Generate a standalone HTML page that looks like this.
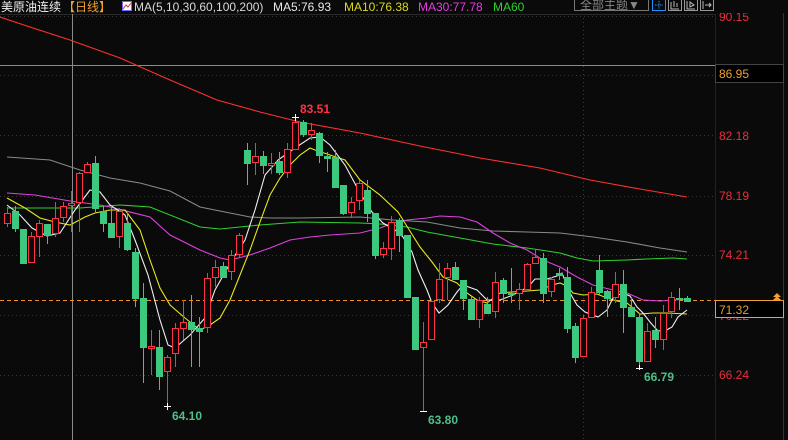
<!DOCTYPE html>
<html><head><meta charset="utf-8"><style>
body{margin:0;background:#0a0a0a;width:788px;height:440px;overflow:hidden;font-family:"Liberation Sans","Noto Sans CJK SC",sans-serif}
svg{position:absolute;left:0;top:0}
</style></head><body>
<svg width="788" height="440" viewBox="0 0 788 440" xmlns="http://www.w3.org/2000/svg" font-family="Liberation Sans, Noto Sans CJK SC, sans-serif">
<rect width="788" height="440" fill="#0a0a0a"/>
<g stroke="#3a3a3a" stroke-dasharray="1,3">
<line x1="0" y1="16.5" x2="715" y2="16.5"/><line x1="0" y1="75.5" x2="715" y2="75.5"/><line x1="0" y1="135.5" x2="715" y2="135.5"/><line x1="0" y1="196.5" x2="715" y2="196.5"/><line x1="0" y1="255.5" x2="715" y2="255.5"/><line x1="0" y1="315.5" x2="715" y2="315.5"/><line x1="0" y1="375.5" x2="715" y2="375.5"/>
<line x1="583.5" y1="14" x2="583.5" y2="440"/>
</g>
<line x1="715.5" y1="14" x2="715.5" y2="440" stroke="#222"/>
<line x1="783.5" y1="0" x2="783.5" y2="440" stroke="#333"/>
<line x1="0" y1="14.5" x2="715" y2="14.5" stroke="#2a2a2a"/>
<line x1="0" y1="65.5" x2="715" y2="65.5" stroke="#8a8a8a"/>
<line x1="72.5" y1="14" x2="72.5" y2="440" stroke="#8a8a8a"/>
<line x1="0" y1="300.5" x2="715" y2="300.5" stroke="#f0902a" stroke-dasharray="4,3"/>
<g fill="none" stroke-width="1.1">
<polyline stroke="#ff3030" points="0,17 30,27 70,40 120,58 170,80 217,100 260,112 300,122 360,133 420,146 480,158 540,168 590,180 640,189 687,197"/>
<polyline stroke="#8a8a8a" points="7,157 50,160 80,170 110,178 140,183 170,191 200,207 230,213 250,217 270,218 300,218 360,217 393,220 427,222 460,228 493,231 527,232 560,233 593,237 627,242 660,248 687,252"/>
<polyline stroke="#30d030" points="7,208 80,208 120,205 150,207 200,227 220,229 260,225 300,222 360,223 380,224 407,227 427,232 460,238 493,244 527,248 547,251 560,253 577,258 593,261 627,260 647,259 673,258 687,259"/>
<polyline stroke="#e040e0" points="7,193 35,195 70,201 100,205 110,207 150,217 170,235 200,250 220,258 230,260 250,255 270,248 290,240 310,237 330,235 360,233 380,228 393,223 407,220 427,218 440,216 460,217 477,222 493,233 510,243 527,250 543,260 560,267 577,277 593,285 613,290 627,293 643,300 660,301 687,299"/>
<polyline stroke="#e8e820" points="7,198 25,208 40,218 55,222 70,225 85,217 95,213 110,210 125,210 140,230 150,260 160,288 170,305 185,318 200,330 210,325 220,318 230,300 240,275 250,250 260,222 270,195 280,178 290,165 300,155 310,148 315,150 330,155 345,160 360,180 380,195 398,212 408,228 420,247 432,262 443,277 457,283 467,293 477,300 487,303 500,293 512,292 527,291 540,290 552,285 560,283 567,286 573,293 583,295 597,294 607,298 617,301 627,303 640,314 653,313 667,313 687,314"/>
<polyline stroke="#f0f0f0" points="7,205 20,215 32,228 47,236 60,233 75,210 90,190 100,192 110,205 125,215 135,240 148,275 160,320 168,345 175,348 190,335 205,318 215,290 232,260 245,240 255,210 265,175 278,160 295,148 310,138 320,137 330,145 345,165 360,193 372,212 383,223 395,230 403,237 412,252 418,270 427,290 432,303 439,313 448,305 457,292 463,285 477,290 487,300 500,300 513,295 528,287 535,279 547,279 557,276 562,273 570,293 577,305 585,312 598,317 607,310 613,298 622,293 630,296 637,307 643,313 650,322 657,330 663,332 672,327 678,317 687,310"/>
</g>
<g stroke="#ff3246" fill="#0a0a0a">
<line x1="7.5" y1="207" x2="7.5" y2="227"/><rect x="4.5" y="213.5" width="6" height="10"/>
<line x1="31.5" y1="232" x2="31.5" y2="262"/><rect x="28.5" y="236.5" width="6" height="26"/>
<line x1="39.5" y1="220" x2="39.5" y2="257"/><rect x="36.5" y="223.5" width="6" height="13"/>
<line x1="55.5" y1="202" x2="55.5" y2="237"/><rect x="52.5" y="218.5" width="6" height="15"/>
<line x1="63.5" y1="202" x2="63.5" y2="222"/><rect x="60.5" y="206.5" width="6" height="11"/>
<line x1="71.5" y1="191" x2="71.5" y2="232"/><rect x="68.5" y="203.5" width="6" height="2"/>
<line x1="79.5" y1="172" x2="79.5" y2="232"/><rect x="76.5" y="173.5" width="6" height="29"/>
<line x1="87.5" y1="162" x2="87.5" y2="173"/><rect x="84.5" y="164.5" width="6" height="8"/>
<line x1="119.5" y1="208" x2="119.5" y2="248"/><rect x="116.5" y="211.5" width="6" height="25"/>
<line x1="151.5" y1="330" x2="151.5" y2="375"/><rect x="148.5" y="346.5" width="6" height="2"/>
<line x1="167.5" y1="355" x2="167.5" y2="408"/><rect x="164.5" y="357.5" width="6" height="14"/>
<line x1="175.5" y1="323" x2="175.5" y2="367"/><rect x="172.5" y="328.5" width="6" height="25"/>
<line x1="183.5" y1="300" x2="183.5" y2="340"/><rect x="180.5" y="322.5" width="6" height="6"/>
<line x1="207.5" y1="273" x2="207.5" y2="333"/><rect x="204.5" y="278.5" width="6" height="49"/>
<line x1="215.5" y1="260" x2="215.5" y2="287"/><rect x="212.5" y="267.5" width="6" height="10"/>
<line x1="231.5" y1="250" x2="231.5" y2="280"/><rect x="228.5" y="255.5" width="6" height="16"/>
<line x1="239.5" y1="233" x2="239.5" y2="257"/><rect x="236.5" y="235.5" width="6" height="19"/>
<line x1="255.5" y1="143" x2="255.5" y2="175"/><rect x="252.5" y="156.5" width="6" height="6"/>
<line x1="271.5" y1="153" x2="271.5" y2="174"/><rect x="268.5" y="163.5" width="6" height="2"/>
<line x1="287.5" y1="143" x2="287.5" y2="178"/><rect x="284.5" y="149.5" width="6" height="23"/>
<line x1="295.5" y1="117" x2="295.5" y2="150"/><rect x="292.5" y="122.5" width="6" height="27"/>
<line x1="311.5" y1="123" x2="311.5" y2="140"/><rect x="308.5" y="130.5" width="6" height="4"/>
<line x1="351.5" y1="197" x2="351.5" y2="218"/><rect x="348.5" y="202.5" width="6" height="10"/>
<line x1="359.5" y1="180" x2="359.5" y2="210"/><rect x="356.5" y="183.5" width="6" height="17"/>
<line x1="383.5" y1="242" x2="383.5" y2="258"/><rect x="380.5" y="248.5" width="6" height="6"/>
<line x1="391.5" y1="216" x2="391.5" y2="260"/><rect x="388.5" y="222.5" width="6" height="26"/>
<line x1="423.5" y1="322" x2="423.5" y2="412"/><rect x="420.5" y="342.5" width="6" height="5"/>
<line x1="431.5" y1="300" x2="431.5" y2="340"/><rect x="428.5" y="301.5" width="6" height="38"/>
<line x1="439.5" y1="263" x2="439.5" y2="303"/><rect x="436.5" y="279.5" width="6" height="20"/>
<line x1="447.5" y1="263" x2="447.5" y2="300"/><rect x="444.5" y="268.5" width="6" height="9"/>
<line x1="479.5" y1="297" x2="479.5" y2="328"/><rect x="476.5" y="300.5" width="6" height="19"/>
<line x1="495.5" y1="272" x2="495.5" y2="318"/><rect x="492.5" y="282.5" width="6" height="29"/>
<line x1="519.5" y1="283" x2="519.5" y2="310"/><rect x="516.5" y="289.5" width="6" height="4"/>
<line x1="527.5" y1="263" x2="527.5" y2="290"/><rect x="524.5" y="264.5" width="6" height="25"/>
<line x1="535.5" y1="249" x2="535.5" y2="263"/><rect x="532.5" y="257.5" width="6" height="6"/>
<line x1="551.5" y1="277" x2="551.5" y2="297"/><rect x="548.5" y="279.5" width="6" height="12"/>
<line x1="583.5" y1="315" x2="583.5" y2="357"/><rect x="580.5" y="318.5" width="6" height="38"/>
<line x1="591.5" y1="287" x2="591.5" y2="318"/><rect x="588.5" y="292.5" width="6" height="25"/>
<line x1="615.5" y1="272" x2="615.5" y2="303"/><rect x="612.5" y="284.5" width="6" height="13"/>
<line x1="647.5" y1="323" x2="647.5" y2="362"/><rect x="644.5" y="331.5" width="6" height="30"/>
<line x1="663.5" y1="305" x2="663.5" y2="350"/><rect x="660.5" y="313.5" width="6" height="26"/>
<line x1="671.5" y1="292" x2="671.5" y2="318"/><rect x="668.5" y="297.5" width="6" height="14"/>
</g>
<g stroke="#3cc87e" fill="#3cc87e">
<line x1="15.5" y1="206" x2="15.5" y2="232"/><rect x="12.5" y="211.5" width="6" height="17"/>
<line x1="23.5" y1="229" x2="23.5" y2="263"/><rect x="20.5" y="229.5" width="6" height="34"/>
<line x1="47.5" y1="224" x2="47.5" y2="244"/><rect x="44.5" y="224.5" width="6" height="11"/>
<line x1="95.5" y1="156" x2="95.5" y2="213"/><rect x="92.5" y="163.5" width="6" height="45"/>
<line x1="103.5" y1="206" x2="103.5" y2="232"/><rect x="100.5" y="211.5" width="6" height="12"/>
<line x1="111.5" y1="206" x2="111.5" y2="237"/><rect x="108.5" y="223.5" width="6" height="14"/>
<line x1="127.5" y1="213" x2="127.5" y2="251"/><rect x="124.5" y="223.5" width="6" height="26"/>
<line x1="135.5" y1="248" x2="135.5" y2="307"/><rect x="132.5" y="252.5" width="6" height="46"/>
<line x1="143.5" y1="283" x2="143.5" y2="383"/><rect x="140.5" y="298.5" width="6" height="49"/>
<line x1="159.5" y1="330" x2="159.5" y2="390"/><rect x="156.5" y="347.5" width="6" height="29"/>
<line x1="191.5" y1="295" x2="191.5" y2="367"/><rect x="188.5" y="322.5" width="6" height="7"/>
<line x1="199.5" y1="317" x2="199.5" y2="367"/><rect x="196.5" y="328.5" width="6" height="3"/>
<line x1="223.5" y1="262" x2="223.5" y2="278"/><rect x="220.5" y="266.5" width="6" height="11"/>
<line x1="247.5" y1="143" x2="247.5" y2="185"/><rect x="244.5" y="150.5" width="6" height="13"/>
<line x1="263.5" y1="151" x2="263.5" y2="174"/><rect x="260.5" y="156.5" width="6" height="9"/>
<line x1="279.5" y1="152" x2="279.5" y2="175"/><rect x="276.5" y="161.5" width="6" height="11"/>
<line x1="303.5" y1="120" x2="303.5" y2="137"/><rect x="300.5" y="122.5" width="6" height="12"/>
<line x1="319.5" y1="132" x2="319.5" y2="163"/><rect x="316.5" y="133.5" width="6" height="22"/>
<line x1="327.5" y1="152" x2="327.5" y2="172"/><rect x="324.5" y="156.5" width="6" height="2"/>
<line x1="335.5" y1="150" x2="335.5" y2="187"/><rect x="332.5" y="157.5" width="6" height="30"/>
<line x1="343.5" y1="185" x2="343.5" y2="215"/><rect x="340.5" y="185.5" width="6" height="28"/>
<line x1="367.5" y1="180" x2="367.5" y2="222"/><rect x="364.5" y="190.5" width="6" height="23"/>
<line x1="375.5" y1="213" x2="375.5" y2="259"/><rect x="372.5" y="213.5" width="6" height="42"/>
<line x1="399.5" y1="218" x2="399.5" y2="252"/><rect x="396.5" y="220.5" width="6" height="15"/>
<line x1="407.5" y1="235" x2="407.5" y2="298"/><rect x="404.5" y="235.5" width="6" height="62"/>
<line x1="415.5" y1="297" x2="415.5" y2="350"/><rect x="412.5" y="297.5" width="6" height="52"/>
<line x1="455.5" y1="262" x2="455.5" y2="280"/><rect x="452.5" y="267.5" width="6" height="12"/>
<line x1="463.5" y1="280" x2="463.5" y2="310"/><rect x="460.5" y="280.5" width="6" height="18"/>
<line x1="471.5" y1="297" x2="471.5" y2="320"/><rect x="468.5" y="299.5" width="6" height="20"/>
<line x1="487.5" y1="297" x2="487.5" y2="313"/><rect x="484.5" y="304.5" width="6" height="9"/>
<line x1="503.5" y1="278" x2="503.5" y2="303"/><rect x="500.5" y="280.5" width="6" height="13"/>
<line x1="511.5" y1="268" x2="511.5" y2="303"/><rect x="508.5" y="293.5" width="6" height="1"/>
<line x1="543.5" y1="253" x2="543.5" y2="303"/><rect x="540.5" y="258.5" width="6" height="35"/>
<line x1="559.5" y1="268" x2="559.5" y2="280"/><rect x="556.5" y="273.5" width="6" height="2"/>
<line x1="567.5" y1="267" x2="567.5" y2="333"/><rect x="564.5" y="277.5" width="6" height="51"/>
<line x1="575.5" y1="323" x2="575.5" y2="363"/><rect x="572.5" y="326.5" width="6" height="31"/>
<line x1="599.5" y1="255" x2="599.5" y2="295"/><rect x="596.5" y="270.5" width="6" height="22"/>
<line x1="607.5" y1="290" x2="607.5" y2="317"/><rect x="604.5" y="291.5" width="6" height="7"/>
<line x1="623.5" y1="270" x2="623.5" y2="333"/><rect x="620.5" y="284.5" width="6" height="23"/>
<line x1="631.5" y1="297" x2="631.5" y2="317"/><rect x="628.5" y="307.5" width="6" height="9"/>
<line x1="639.5" y1="313" x2="639.5" y2="368"/><rect x="636.5" y="317.5" width="6" height="44"/>
<line x1="655.5" y1="317" x2="655.5" y2="348"/><rect x="652.5" y="330.5" width="6" height="9"/>
<line x1="679.5" y1="288" x2="679.5" y2="310"/><rect x="676.5" y="298.5" width="6" height="1"/>
<line x1="687.5" y1="296" x2="687.5" y2="302"/><rect x="684.5" y="298.5" width="6" height="3"/>
</g>
<g stroke="#fff">
<line x1="292" y1="117.5" x2="299" y2="117.5"/><line x1="295.5" y1="114" x2="295.5" y2="121"/>
<line x1="164" y1="406.5" x2="171" y2="406.5"/><line x1="167.5" y1="403" x2="167.5" y2="410"/>
<line x1="420" y1="411.5" x2="427" y2="411.5"/>
<line x1="636" y1="368.5" x2="643" y2="368.5"/><line x1="639.5" y1="365" x2="639.5" y2="370"/>
</g>
<g font-size="12" font-weight="bold">
<text x="300" y="113" fill="#ff3246">83.51</text>
<text x="172" y="420" fill="#4ebf88">64.10</text>
<text x="428" y="424" fill="#4ebf88">63.80</text>
<text x="644" y="381" fill="#4ebf88">66.79</text>
</g>
<g font-size="12" fill="#e8303c">
<text x="719" y="21">90.15</text>
<text x="719" y="140">82.18</text>
<text x="719" y="200">78.19</text>
<text x="719" y="259">74.21</text>
<text x="719" y="320">70.22</text>
<text x="719" y="379">66.24</text>
</g>
<rect x="715.5" y="64.5" width="68" height="18" fill="#000" stroke="#444"/>
<text x="719" y="78" font-size="12" fill="#f0a030">86.95</text>
<rect x="715.5" y="300.5" width="68" height="17" fill="#000" stroke="#f0a030"/>
<text x="719" y="314" font-size="12" fill="#e0a030">71.32</text>
<path d="M773 297 L777 293 L781 297 Z M773 300 L777 296 L781 300 Z" fill="#f0a030"/>
<rect x="0" y="0" width="788" height="13" fill="#0a0a0a"/>
<g font-size="12">
<text x="1" y="11" fill="#f0f0f0">美原油连续</text>
<text x="63" y="11" fill="#f0a030">【日线】</text>
<text x="134" y="11" fill="#d8d8d8">MA(5,10,30,60,100,200)</text>
<text x="273" y="11" fill="#e8e8e8">MA5:76.93</text>
<text x="344" y="11" fill="#d8d820">MA10:76.38</text>
<text x="418" y="11" fill="#e040e0">MA30:77.78</text>
<text x="493" y="11" fill="#30d030">MA60</text>
</g>
<rect x="122.5" y="1.5" width="9" height="9" fill="#fff" stroke="#6a6aff"/>
<polyline points="123,9 126,5 128,7 131,3" fill="none" stroke="#e03030"/>
<rect x="574.5" y="-1.5" width="74" height="12" fill="none" stroke="#777"/>
<text x="580" y="9" font-size="12" fill="#888">全部主题▼</text>
<g fill="none">
<rect x="652.5" y="-1.5" width="13" height="12" stroke="#1e90ff"/>
<path d="M659 1 V9 M655 5 H663" stroke="#1e90ff" stroke-dasharray="1.5,1"/>
<rect x="668.5" y="-1.5" width="13" height="12" stroke="#999"/>
<path d="M671 2 V9 H679 M674 1 V7 M677 3 V7" stroke="#bbb"/>
<rect x="684.5" y="-1.5" width="13" height="12" stroke="#999"/>
<path d="M687 1 V9 H695 M690 2 V7 L694 5 Z" stroke="#bbb"/>
<rect x="700.5" y="-1.5" width="13" height="12" stroke="#999"/>
<path d="M703 1 V9 M705 5 H711 M709 3 L711 5 L709 7" stroke="#bbb"/>
</g>
</svg>
</body></html>
